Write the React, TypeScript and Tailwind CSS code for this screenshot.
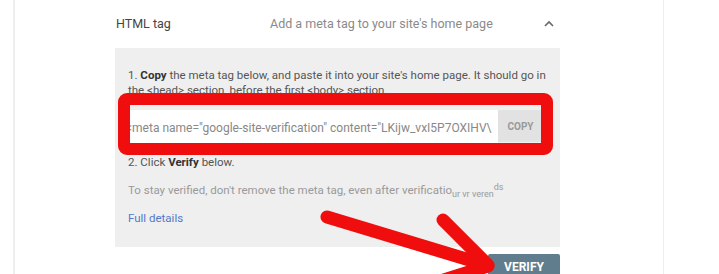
import React from "react";

const App = () => {
  return (
    <div className="relative w-[719px] h-[274px] overflow-hidden bg-white font-['Roboto',sans-serif]">
      <div className="flex h-full">
        <div className="w-[13px]" />
        <div className="w-[2px] bg-[#eeeeee]" />
        <div className="w-[100px]" />

        <div className="w-[445px] flex flex-col">
          {/* header */}
          <div className="h-[48px] shrink-0 flex items-center">
            <div className="w-[155px] pl-px text-[12.5px] text-[#444]">HTML tag</div>
            <div className="flex-1 text-[12.5px] text-[#8a8a8a]">
              Add a meta tag to your site's home page
            </div>
            <svg width="12" height="12" viewBox="0 0 12 12" className="mr-[5px]">
              <path d="M2 8 L6 4 L10 8" fill="none" stroke="#666" strokeWidth="1.6" />
            </svg>
          </div>

          {/* body */}
          <div className="h-[199px] shrink-0 bg-[#efefef] pl-[13px] pr-[8px] pt-[20px] flex flex-col">
            <p className="text-[11.5px] leading-[15px] text-[#555]">
              1. <b className="text-[#333]">Copy</b> the meta tag below, and paste it into your site's home page. It should go in
              the &lt;head&gt; section, before the first &lt;body&gt; section.
            </p>
            <div className="mt-[12px] ml-[2px] mr-[9px] h-[36px] flex">
              <div className="flex-1 bg-white border-b border-[#cfcfcf] overflow-hidden flex items-center">
                <span className="whitespace-nowrap text-[12px] text-[#888] -ml-[4px]">
                  &lt;meta name="google-site-verification" content="LKijw_vxI5P7OXIHV\
                </span>
              </div>
              <div className="w-[45px] h-[32px] bg-[#e2e2e2] flex items-center justify-center text-[10px] font-bold text-[#999]">
                COPY
              </div>
            </div>
            <p className="mt-[9px] text-[11.5px] leading-[15px] text-[#555]">
              2. Click <b className="text-[#333]">Verify</b> below.
            </p>
            <p className="mt-[13px] text-[11.5px] leading-[15px] text-[#9a9a9a] whitespace-nowrap">
              To stay verified, don't remove the meta tag, even after verificatio
              <span className="text-[9px] relative top-[3px]">ur vr veren</span>
              <span className="text-[9px] relative -top-[4px]">ds</span>
            </p>
            <p className="mt-[12px] text-[11.5px] leading-[15px] text-[#5577cc]">Full details</p>
          </div>

          {/* footer */}
          <div className="flex justify-end pt-[7px]">
            <div className="w-[72px] h-[26px] rounded-[2px] bg-[#5f7d8c] flex items-center justify-center text-[12px] font-bold text-white">
              VERIFY
            </div>
          </div>
        </div>

        <div className="w-[103px]" />
        <div className="w-px bg-[#eeeeee]" />
      </div>

      {/* red highlight box */}
      <div className="absolute left-[118px] top-[93px] w-[435px] h-[62px] border-[12px] border-[#f00d0d] rounded-[9px]" />

      {/* red arrow */}
      <svg className="absolute left-0 top-0" width="719" height="274" viewBox="0 0 719 274">
        <g stroke="#f00d0d" strokeWidth="13" strokeLinecap="round" fill="none">
          <path d="M327 217 L486 265" />
          <path d="M443 220 L488 265" />
          <path d="M488 266 L412 290" />
        </g>
      </svg>
    </div>
  );
};

export default App;
